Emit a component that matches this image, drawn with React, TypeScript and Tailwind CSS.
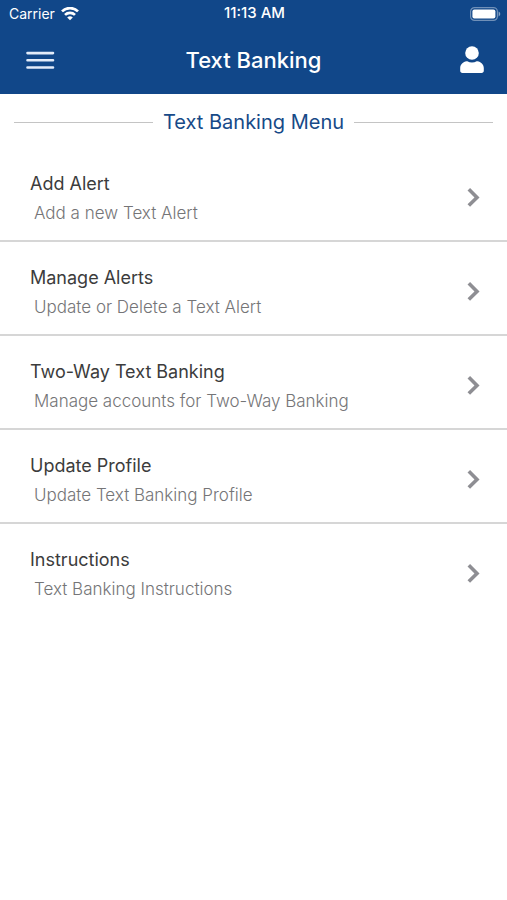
interface MenuItem {
  title: string
  description: string
  href: string
}

const menuItems: MenuItem[] = [
  { title: "Add Alert", description: "Add a new Text Alert", href: "#add-alert" },
  { title: "Manage Alerts", description: "Update or Delete a Text Alert", href: "#manage-alerts" },
  { title: "Two-Way Text Banking", description: "Manage accounts for Two-Way Banking", href: "#two-way" },
  { title: "Update Profile", description: "Update Text Banking Profile", href: "#profile" },
  { title: "Instructions", description: "Text Banking Instructions", href: "#instructions" },
]

function WifiIcon() {
  return (
    <svg width="18" height="14" viewBox="0 0 18 14" fill="none" stroke="currentColor" strokeWidth="2.7" aria-hidden="true">
      <path d="M1 4.4a11.4 11.4 0 0 1 16 0" />
      <path d="M4 7.9a7.1 7.1 0 0 1 10 0" />
      <path d="M9 13.3 6.2 10.5a4 4 0 0 1 5.6 0z" fill="currentColor" stroke="none" />
    </svg>
  )
}

function BatteryIcon() {
  return (
    <svg width="31" height="14" viewBox="0 0 31 14" aria-hidden="true">
      <rect x="0.6" y="0.6" width="26.8" height="12.8" rx="4" fill="none" stroke="#fff" strokeOpacity="0.4" strokeWidth="1.2" />
      <rect x="2.4" y="2.4" width="23" height="9.2" rx="2" fill="#fff" />
      <path d="M28.6 4.6c2.2.8 2.2 4 0 4.8z" fill="#fff" fillOpacity="0.5" />
    </svg>
  )
}

function StatusBar() {
  return (
    <div className="grid h-7 grid-cols-3 items-center pr-1.5 pb-px pl-2">
      <div className="flex items-center gap-1.5 pl-px text-[14px]">
        <span>Carrier</span>
        <WifiIcon />
      </div>
      <span className="text-center text-[15px] font-medium">11:13 AM</span>
      <div className="flex justify-end">
        <BatteryIcon />
      </div>
    </div>
  )
}

function NavBar() {
  return (
    <div className="flex h-[66px] items-center justify-between px-[22px] pb-px">
      <button type="button" aria-label="Menu" className="flex h-9 w-9 items-center justify-center">
        <svg width="30" height="20" viewBox="0 0 30 20" stroke="#e3ecfa" strokeWidth="2.6" strokeLinecap="round" aria-hidden="true">
          <path d="M2.5 2.1h25.5M2.5 9.3h25.5M2.5 16.5h25.5" />
        </svg>
      </button>
      <h1 className="text-[22px] font-medium">Text Banking</h1>
      <button type="button" aria-label="Profile" className="flex h-9 w-9 items-center justify-end">
        <svg width="26" height="30" viewBox="0 -1 26 30" fill="currentColor" aria-hidden="true">
          <circle cx="13" cy="6" r="6.8" />
          <path d="M7.6 14.2h.7c2.8 1.7 6.6 1.7 9.4 0h.7c3.5.4 6.4 3.2 6.4 6.900v2.600c0 1.300-.9 2.200-2.200 2.200H3.400c-1.300 0-2.200-.9-2.200-2.200v-2.600c0-3.700 2.900-6.500 6.400-6.900z" />
        </svg>
      </button>
    </div>
  )
}

function MenuRow({ item }: { item: MenuItem }) {
  return (
    <li className="border-b-2 border-[#d6d6d6] last:border-b-0">
      <a href={item.href} className="flex items-center justify-between pt-[22px] pr-6 pb-3 pl-[30px]">
        <div>
          <p className="text-[18px] leading-7 text-[#3c3c3c]">{item.title}</p>
          <p className="pl-1 text-[17px] leading-[30px] font-light text-[#757577]">{item.description}</p>
        </div>
        <svg width="18" height="24" viewBox="0 0 18 24" fill="none" stroke="#8e8e93" strokeWidth="3.6" aria-hidden="true">
          <path d="M3.8 2.2l8.2 8.2-8.2 8.2" />
        </svg>
      </a>
    </li>
  )
}

export default function App() {
  return (
    <div className="min-h-screen bg-white font-['Inter',sans-serif]">
      <header className="bg-[#114789] text-white">
        <StatusBar />
        <NavBar />
      </header>

      <main>
        {/* Section title */}
        <div className="flex h-[54px] items-center gap-2.5 px-3.5 pt-0.5">
          <div className="h-px flex-1 bg-[#c4c4c4]" />
          <h2 className="text-[20px] text-[#174a88]">Text Banking Menu</h2>
          <div className="h-px flex-1 bg-[#c4c4c4]" />
        </div>

        <ul>
          {menuItems.map((item) => (
            <MenuRow key={item.href} item={item} />
          ))}
        </ul>
      </main>
    </div>
  )
}
